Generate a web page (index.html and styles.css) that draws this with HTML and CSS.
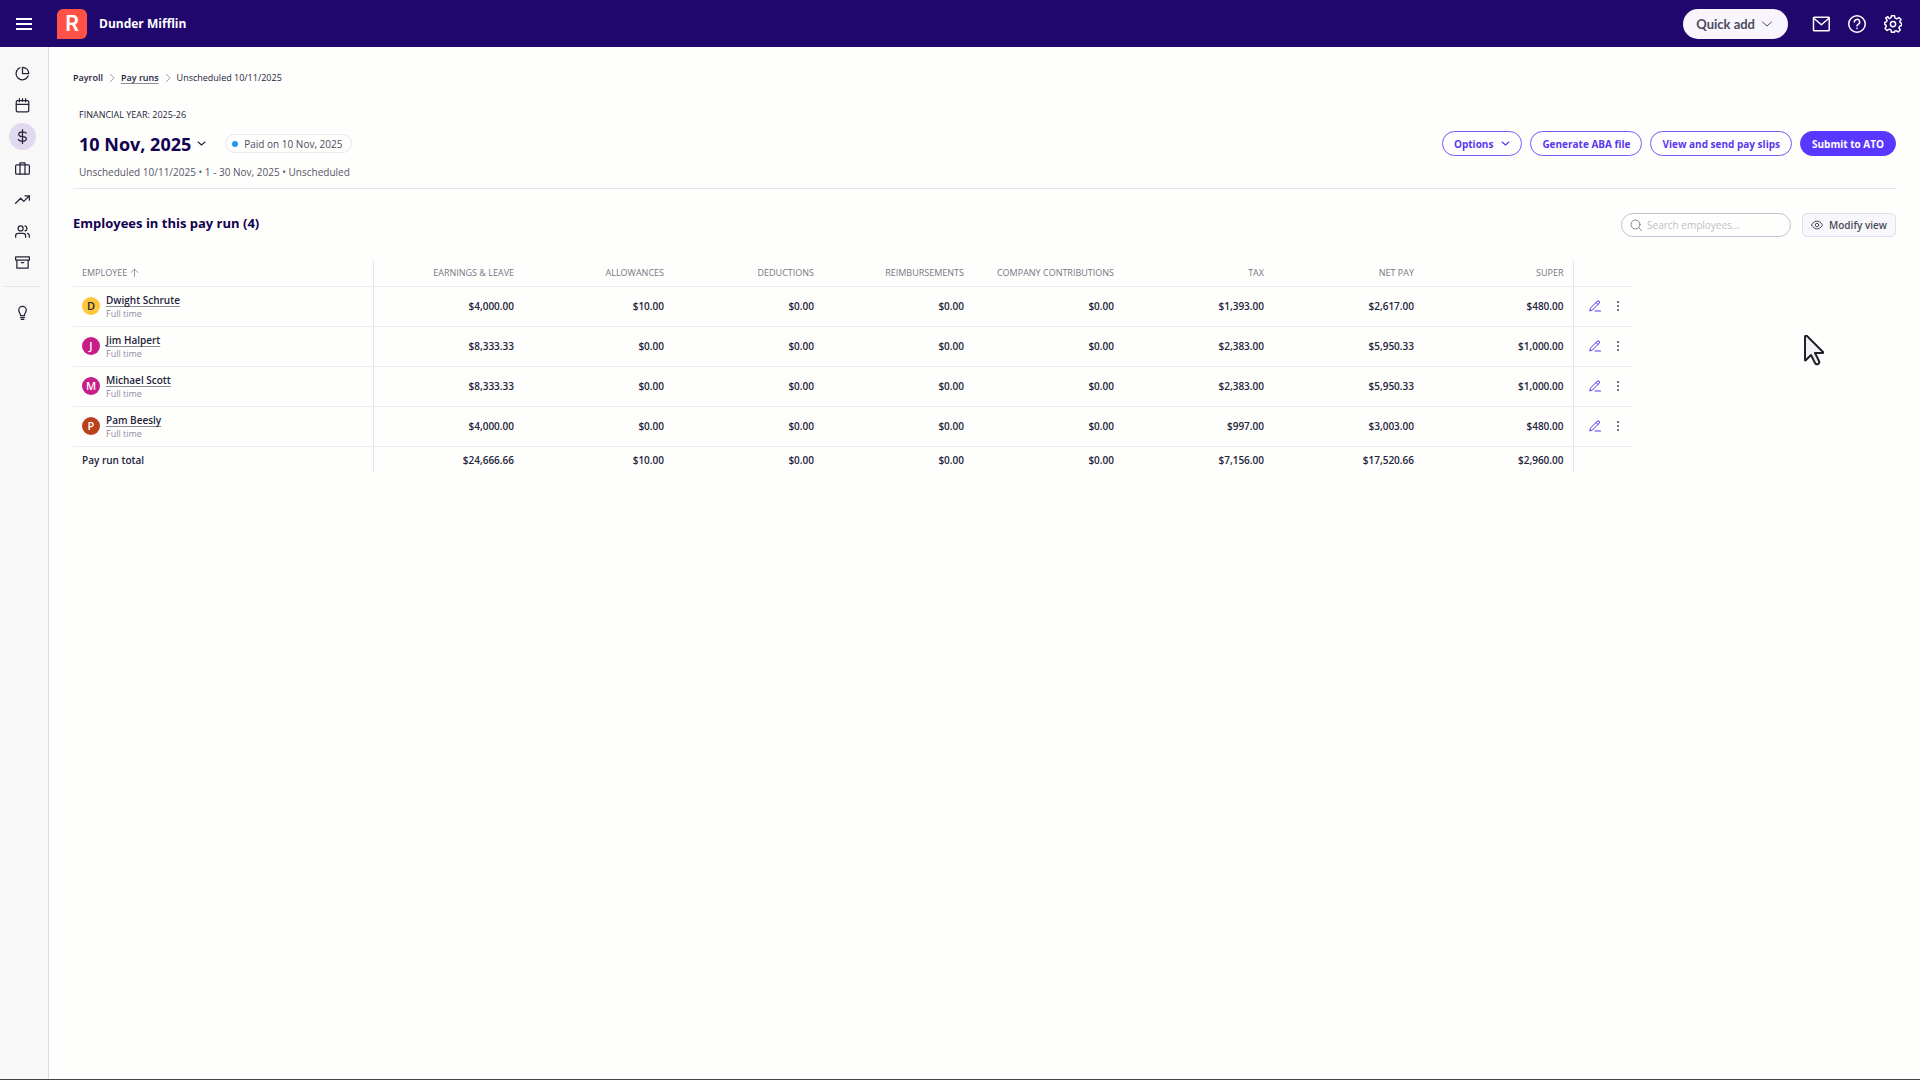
FILE: index.html
```html
<!DOCTYPE html>
<html lang="en">
<head>
    <meta charset="UTF-8">
    <meta name="viewport" content="width=device-width, initial-scale=1.0">
    <title>Pay run - Dunder Mifflin</title>
    <link rel="stylesheet" href="styles.css">
</head>
<body>
    <!-- shared icons -->
    <svg class="sprite" aria-hidden="true">
        <symbol id="chevron" viewBox="0 0 24 24"><path d="M3 8l9 8 9-8"/></symbol>
        <symbol id="pencil" viewBox="0 0 24 24"><path d="M12 22h11M16.500 2.500a2.500 2.500 0 0 1 4 3.500L7 20l-5.500 2L3 16.500zM14 5l4 4"/></symbol>
        <symbol id="dots" viewBox="0 0 24 24"><circle cx="12" cy="4" r="2"/><circle cx="12" cy="12" r="2"/><circle cx="12" cy="20" r="2"/></symbol>
    </svg>

    <header class="topbar">
        <button class="icon-btn menu-btn" aria-label="Menu"><svg class="icon" viewBox="0 0 16 16"><path d="M0 3h16M0 8h16M0 13h16"/></svg></button>
        <a href="#" class="logo">R</a>
        <span class="company">Dunder Mifflin</span>
        <button class="quick-add">Quick add <svg class="icon" viewBox="0 0 24 24"><use href="#chevron"/></svg></button>
        <nav class="top-icons">
            <button class="icon-btn" aria-label="Messages"><svg class="icon" viewBox="0 0 24 24"><rect x="2" y="3" width="21" height="18" rx="1"/><path d="M2 4l10.500 9L23 4"/></svg></button>
            <button class="icon-btn" aria-label="Help"><svg class="icon" viewBox="0 0 24 24"><circle cx="12" cy="12" r="11"/><path d="M8.500 9.500a3.500 3.500 0 1 1 5 3c-1 .6-1.500 1-1.500 2M12 17.500v.5"/></svg></button>
            <button class="icon-btn" aria-label="Settings"><svg class="icon" viewBox="0 0 24 24"><circle cx="12" cy="12" r="3.500"/><path d="M10 1h4l.8 3.100 2.200 1 2.900-1.700 2.700 2.700L21 9l.8 1 .2.500 1.500.5v3l-2.600.9-1 2.100 1.700 2.900-2.700 2.700-2.900-1.700-2.200 1L14 23h-4l-.8-3.100-2.200-1-2.900 1.700-2.700-2.700L3.100 15l-1-2.200L.8 12.500v-2.500l2.300-.9 1-2.200L2.400 4l2.700-1.700L7 4.900l2.200-1z"/></svg></button>
        </nav>
    </header>

    <div class="layout">
        <nav class="sidebar">
            <div class="nav-group">
                <a href="#" aria-label="Dashboard"><svg class="icon" viewBox="0 0 24 24"><path d="M21 15.900A10 10 0 1 1 8 2.800"/><path d="M22 12A10 10 0 0 0 12 2v10z"/></svg></a>
                <a href="#" aria-label="Calendar"><svg class="icon" viewBox="0 0 24 24"><rect x="2" y="4" width="20" height="18" rx="2"/><path d="M7 1v5M12 1v4M17 1v5M2 10h20"/></svg></a>
                <a href="#" class="active" aria-label="Payroll"><svg class="icon" viewBox="0 0 24 24"><path d="M12 1v22M18 6.500C17 5 15 4.500 12 4.500c-8 0-8 7.500 0 7.500s8.500 7.500 0 7.500c-3.500 0-5.500-1-6.500-2.500"/></svg></a>
                <a href="#" aria-label="Work"><svg class="icon" viewBox="0 0 24 24"><rect x="1" y="6" width="22" height="15" rx="2"/><path d="M8 21V3h8v18"/></svg></a>
                <a href="#" aria-label="Reports"><svg class="icon" viewBox="0 0 24 24"><path d="M23 6l-9 9-5-5-8 8M16 6h7v7"/></svg></a>
                <a href="#" aria-label="Employees"><svg class="icon" viewBox="0 0 24 24"><path d="M17 21v-2a4 4 0 0 0-4-4H5a4 4 0 0 0-4 4v2M23 21v-2a4 4 0 0 0-3-3.900M16 3.100a4 4 0 0 1 0 7.800"/><circle cx="9" cy="7" r="4"/></svg></a>
                <a href="#" aria-label="Files"><svg class="icon" viewBox="0 0 24 24"><path d="M21 8v13H3V8M1 3h22v5H1zM10 12h4"/></svg></a>
            </div>
            <hr>
            <a href="#" aria-label="Tips"><svg class="icon" viewBox="0 0 24 24"><path d="M9 17c0-4-3-4.500-3-9a6 6 0 0 1 12 0c0 4.500-3 5-3 9zM9 20h6M10 23h4"/></svg></a>
        </nav>

        <main class="content">
            <nav class="breadcrumb">
                <strong>Payroll</strong>
                <svg class="icon" viewBox="0 0 24 24"><path d="M8 3l9 9-9 9"/></svg>
                <a href="#">Pay runs</a>
                <svg class="icon" viewBox="0 0 24 24"><path d="M8 3l9 9-9 9"/></svg>
                <span>Unscheduled 10/11/2025</span>
            </nav>

            <section class="run-header">
                <div class="run-info">
                    <div class="fin-year">FINANCIAL YEAR: 2025-26</div>
                    <div class="run-title">
                        <h1>10 Nov, 2025</h1>
                        <button class="date-btn" aria-label="Choose pay run"><svg class="icon" viewBox="0 0 24 24"><use href="#chevron"/></svg></button>
                        <span class="status">Paid on 10 Nov, 2025</span>
                    </div>
                    <div class="run-period">Unscheduled 10/11/2025 • 1 - 30 Nov, 2025 • Unscheduled</div>
                </div>
                <div class="actions">
                    <button class="btn">Options <svg class="icon" viewBox="0 0 24 24"><use href="#chevron"/></svg></button>
                    <button class="btn">Generate ABA file</button>
                    <button class="btn">View and send pay slips</button>
                    <button class="btn btn-primary">Submit to ATO</button>
                </div>
            </section>

            <section class="list-header">
                <h2>Employees in this pay run (4)</h2>
                <label class="search">
                    <svg class="icon" viewBox="0 0 24 24"><circle cx="11" cy="11" r="9"/><path d="M17.500 17.500L23 23"/></svg>
                    <input type="text" placeholder="Search employees..." aria-label="Search employees">
                </label>
                <button class="modify"><svg class="icon" viewBox="0 0 24 24"><path d="M1 12s4-8 11-8 11 8 11 8-4 8-11 8S1 12 1 12z"/><circle cx="12" cy="12" r="3.500"/></svg>Modify view</button>
            </section>

            <table class="pay-table">
                <colgroup>
                    <col class="col-name">
                    <col span="8" class="col-amount">
                    <col class="col-actions">
                </colgroup>
                <thead>
                    <tr>
                        <th>EMPLOYEE <svg class="icon" viewBox="0 0 24 24"><path d="M12 22V3M3 12l9-9 9 9"/></svg></th>
                        <th>EARNINGS &amp; LEAVE</th><th>ALLOWANCES</th><th>DEDUCTIONS</th><th>REIMBURSEMENTS</th><th>COMPANY CONTRIBUTIONS</th><th>TAX</th><th>NET PAY</th><th>SUPER</th>
                        <th></th>
                    </tr>
                </thead>
                <tbody>
                    <tr>
                        <td><div class="employee"><span class="avatar yellow">D</span><div><a href="#">Dwight Schrute</a><small>Full time</small></div></div></td>
                        <td>$4,000.00</td><td>$10.00</td><td>$0.00</td><td>$0.00</td><td>$0.00</td><td>$1,393.00</td><td>$2,617.00</td><td>$480.00</td>
                        <td><div class="row-actions"><button class="icon-btn edit" aria-label="Edit Dwight Schrute"><svg class="icon" viewBox="0 0 24 24"><use href="#pencil"/></svg></button><button class="icon-btn more" aria-label="More"><svg class="icon" viewBox="0 0 24 24"><use href="#dots"/></svg></button></div></td>
                    </tr>
                    <tr>
                        <td><div class="employee"><span class="avatar pink">J</span><div><a href="#">Jim Halpert</a><small>Full time</small></div></div></td>
                        <td>$8,333.33</td><td>$0.00</td><td>$0.00</td><td>$0.00</td><td>$0.00</td><td>$2,383.00</td><td>$5,950.33</td><td>$1,000.00</td>
                        <td><div class="row-actions"><button class="icon-btn edit" aria-label="Edit Jim Halpert"><svg class="icon" viewBox="0 0 24 24"><use href="#pencil"/></svg></button><button class="icon-btn more" aria-label="More"><svg class="icon" viewBox="0 0 24 24"><use href="#dots"/></svg></button></div></td>
                    </tr>
                    <tr>
                        <td><div class="employee"><span class="avatar pink">M</span><div><a href="#">Michael Scott</a><small>Full time</small></div></div></td>
                        <td>$8,333.33</td><td>$0.00</td><td>$0.00</td><td>$0.00</td><td>$0.00</td><td>$2,383.00</td><td>$5,950.33</td><td>$1,000.00</td>
                        <td><div class="row-actions"><button class="icon-btn edit" aria-label="Edit Michael Scott"><svg class="icon" viewBox="0 0 24 24"><use href="#pencil"/></svg></button><button class="icon-btn more" aria-label="More"><svg class="icon" viewBox="0 0 24 24"><use href="#dots"/></svg></button></div></td>
                    </tr>
                    <tr>
                        <td><div class="employee"><span class="avatar rust">P</span><div><a href="#">Pam Beesly</a><small>Full time</small></div></div></td>
                        <td>$4,000.00</td><td>$0.00</td><td>$0.00</td><td>$0.00</td><td>$0.00</td><td>$997.00</td><td>$3,003.00</td><td>$480.00</td>
                        <td><div class="row-actions"><button class="icon-btn edit" aria-label="Edit Pam Beesly"><svg class="icon" viewBox="0 0 24 24"><use href="#pencil"/></svg></button><button class="icon-btn more" aria-label="More"><svg class="icon" viewBox="0 0 24 24"><use href="#dots"/></svg></button></div></td>
                    </tr>
                </tbody>
                <tfoot>
                    <tr>
                        <td>Pay run total</td>
                        <td>$24,666.66</td><td>$10.00</td><td>$0.00</td><td>$0.00</td><td>$0.00</td><td>$7,156.00</td><td>$17,520.66</td><td>$2,960.00</td>
                        <td></td>
                    </tr>
                </tfoot>
            </table>
        </main>
    </div>

    <svg class="cursor" viewBox="0 0 20 31" aria-hidden="true"><path d="M1 2v23q0 1 1 0l5-5 4 8q1 2 3 1t1-3l-4-8h7q2 0 1-1L3 1Q1 0 1 2z"/></svg>
</body>
</html>
```
FILE: styles.css
```css
* { box-sizing: border-box; }
body { margin: 0; min-height: 100vh; display: flex; flex-direction: column; font-family: "Open Sans", "Noto Sans", sans-serif; font-size: 10px; line-height: 16px; color: #24243a; background: #fefefd; border-bottom: 1px solid #444; }
button, input { font: inherit; color: inherit; }
button { display: flex; align-items: center; justify-content: center; cursor: pointer; padding: 0; border: none; background: none; }
a { color: inherit; }
.sprite { display: none; }
.icon { width: 12px; height: 12px; flex: none; fill: none; stroke: currentColor; stroke-width: 2; stroke-linecap: round; stroke-linejoin: round; }

/* Top bar */
.topbar { display: flex; align-items: center; height: 47px; padding: 1px 18px 0 16px; background: #20076d; color: #fff; }
.menu-btn .icon { width: 16px; height: 16px; }
.logo { display: flex; align-items: center; justify-content: center; width: 30px; height: 30px; margin: 0 12px 0 25px; border-radius: 6px 6px 6px 0; background: #ff5147; color: #fff; font-family: Inter, sans-serif; font-size: 21px; font-weight: 600; text-decoration: none; }
.company { font-size: 12px; font-weight: bold; }
.quick-add { gap: 6px; height: 30px; padding: 0 15px 0 13px; margin-left: auto; border-radius: 15px; background: #f8f6fc; color: #4c4b5c; font-family: Lato, sans-serif; font-size: 13px; font-weight: bold; }
.top-icons { display: flex; gap: 18px; margin-left: 24px; }
.top-icons .icon { width: 18px; height: 18px; }

.layout { display: flex; flex: 1; }

/* Sidebar */
.sidebar { display: flex; flex-direction: column; align-items: center; width: 49px; padding: 13px 4px 0 0; border-right: 1px solid #dcd9ee; background: #f8f8f8; }
.nav-group { display: flex; flex-direction: column; justify-content: space-between; height: 216px; }
.sidebar a { display: flex; align-items: center; justify-content: center; width: 27px; height: 27px; border-radius: 50%; }
.sidebar a .icon { width: 15px; height: 15px; }
.sidebar .active { background: #e0d9f0; }
.sidebar hr { width: 36px; margin: 10px 0 12px; border: none; border-top: 1px solid #e6e6ec; }

.content { flex: 1; padding: 23px 24px 24px; }
.breadcrumb { display: flex; align-items: center; gap: 4px; font-size: 9px; }
.breadcrumb strong, .breadcrumb a { font-weight: 600; }
.breadcrumb .icon { width: 10px; height: 10px; color: #8c8c99; }
.breadcrumb a { text-underline-offset: 2px; text-decoration-color: #8c8c99; }

/* Pay run heading */
.run-header { display: flex; align-items: center; justify-content: space-between; padding: 21px 0 8px 6px; border-bottom: 1px solid #e4e4ea; }
.fin-year { font-size: 9px; font-weight: 500; }
.run-title { display: flex; align-items: center; height: 41px; }
.run-title h1 { margin: 0; font-size: 18px; line-height: 24px; color: #120050; }
.date-btn { margin: 0 19px 0 6px; }
.date-btn .icon { width: 9px; height: 9px; stroke-width: 3; }
.status { display: flex; align-items: center; gap: 6px; height: 19px; padding: 0 9px 0 6px; border: 1px solid #e8e8ee; border-radius: 10px; font-weight: 500; color: #4c4b5c; }
.status::before { content: ""; width: 6px; height: 6px; border-radius: 50%; background: #1b9af0; }
.run-period { font-weight: 500; color: #565566; }
.actions { display: flex; gap: 8px; }
.btn { gap: 8px; height: 25px; padding: 0 11px; border: 1px solid #7658f5; border-radius: 13px; color: #5a37ee; background: #fff; font-weight: bold; }
.btn .icon { width: 9px; height: 9px; stroke-width: 3; }
.btn-primary { background: #5a37ff; border-color: #5a37ff; color: #fff; }

.list-header { display: flex; align-items: center; height: 72px; }
.list-header h2 { margin: 0 auto 4px 0; font-size: 13px; line-height: 20px; font-weight: bold; color: #120050; }
.search { display: flex; align-items: center; gap: 5px; width: 170px; height: 24px; padding: 0 8px; border: 1px solid #c4c3d2; border-radius: 12px; color: #85858f; }
.search input { width: 100%; min-width: 0; padding: 0; border: none; outline: none; background: none; }
.search input::placeholder { color: #c0c0c6; }
.modify { gap: 6px; height: 24px; margin-left: 11px; padding: 0 8px; border: 1px solid #e2def0; border-radius: 5px; background: #f8f7fb; color: #4c4b5c; font-weight: 600; }

/* Pay table */
.pay-table { table-layout: fixed; width: 1560px; border-collapse: collapse; }
.col-name { width: 300px; }
.col-amount { width: 150px; }
.col-actions { width: 60px; }
.pay-table th, .pay-table td { padding: 0 9px; text-align: right; border-bottom: 1px solid #ececf0; white-space: nowrap; }
.pay-table th { height: 25px; font-size: 9px; font-weight: normal; color: #77777f; }
.pay-table th .icon { width: 9px; height: 9px; vertical-align: -1px; }
.pay-table td { height: 40px; font-weight: 600; }
.pay-table th:first-child, .pay-table td:first-child { text-align: left; border-right: 1px solid #e4e4ea; }
.pay-table th:last-child, .pay-table td:last-child { border-left: 1px solid #e4e4ea; }
.pay-table tfoot td { height: 27px; border-bottom: none; }
.employee { display: flex; align-items: center; gap: 6px; }
.employee a { text-underline-offset: 2px; text-decoration-color: #8c8c99; }
.employee small { display: block; font-size: 9px; line-height: 12px; font-weight: normal; color: #8e8e9e; }
.avatar { display: flex; align-items: center; justify-content: center; width: 18px; height: 18px; border-radius: 50%; font-size: 11px; color: #fff; }
.yellow { background: #fdc63b; color: #24243a; }
.pink { background: #c61d87; }
.rust { background: #b9401a; }
.row-actions { display: flex; align-items: center; justify-content: space-between; padding: 0 0 0 6px; }
.edit { color: #5a37ee; }
.more .icon { fill: #44434f; stroke: none; }

/* Mouse pointer above the page */
.cursor { position: absolute; left: 1804px; top: 335px; width: 20px; height: 31px; fill: #f4f2f6; stroke: #222129; stroke-width: 2; stroke-linejoin: round; }
```
